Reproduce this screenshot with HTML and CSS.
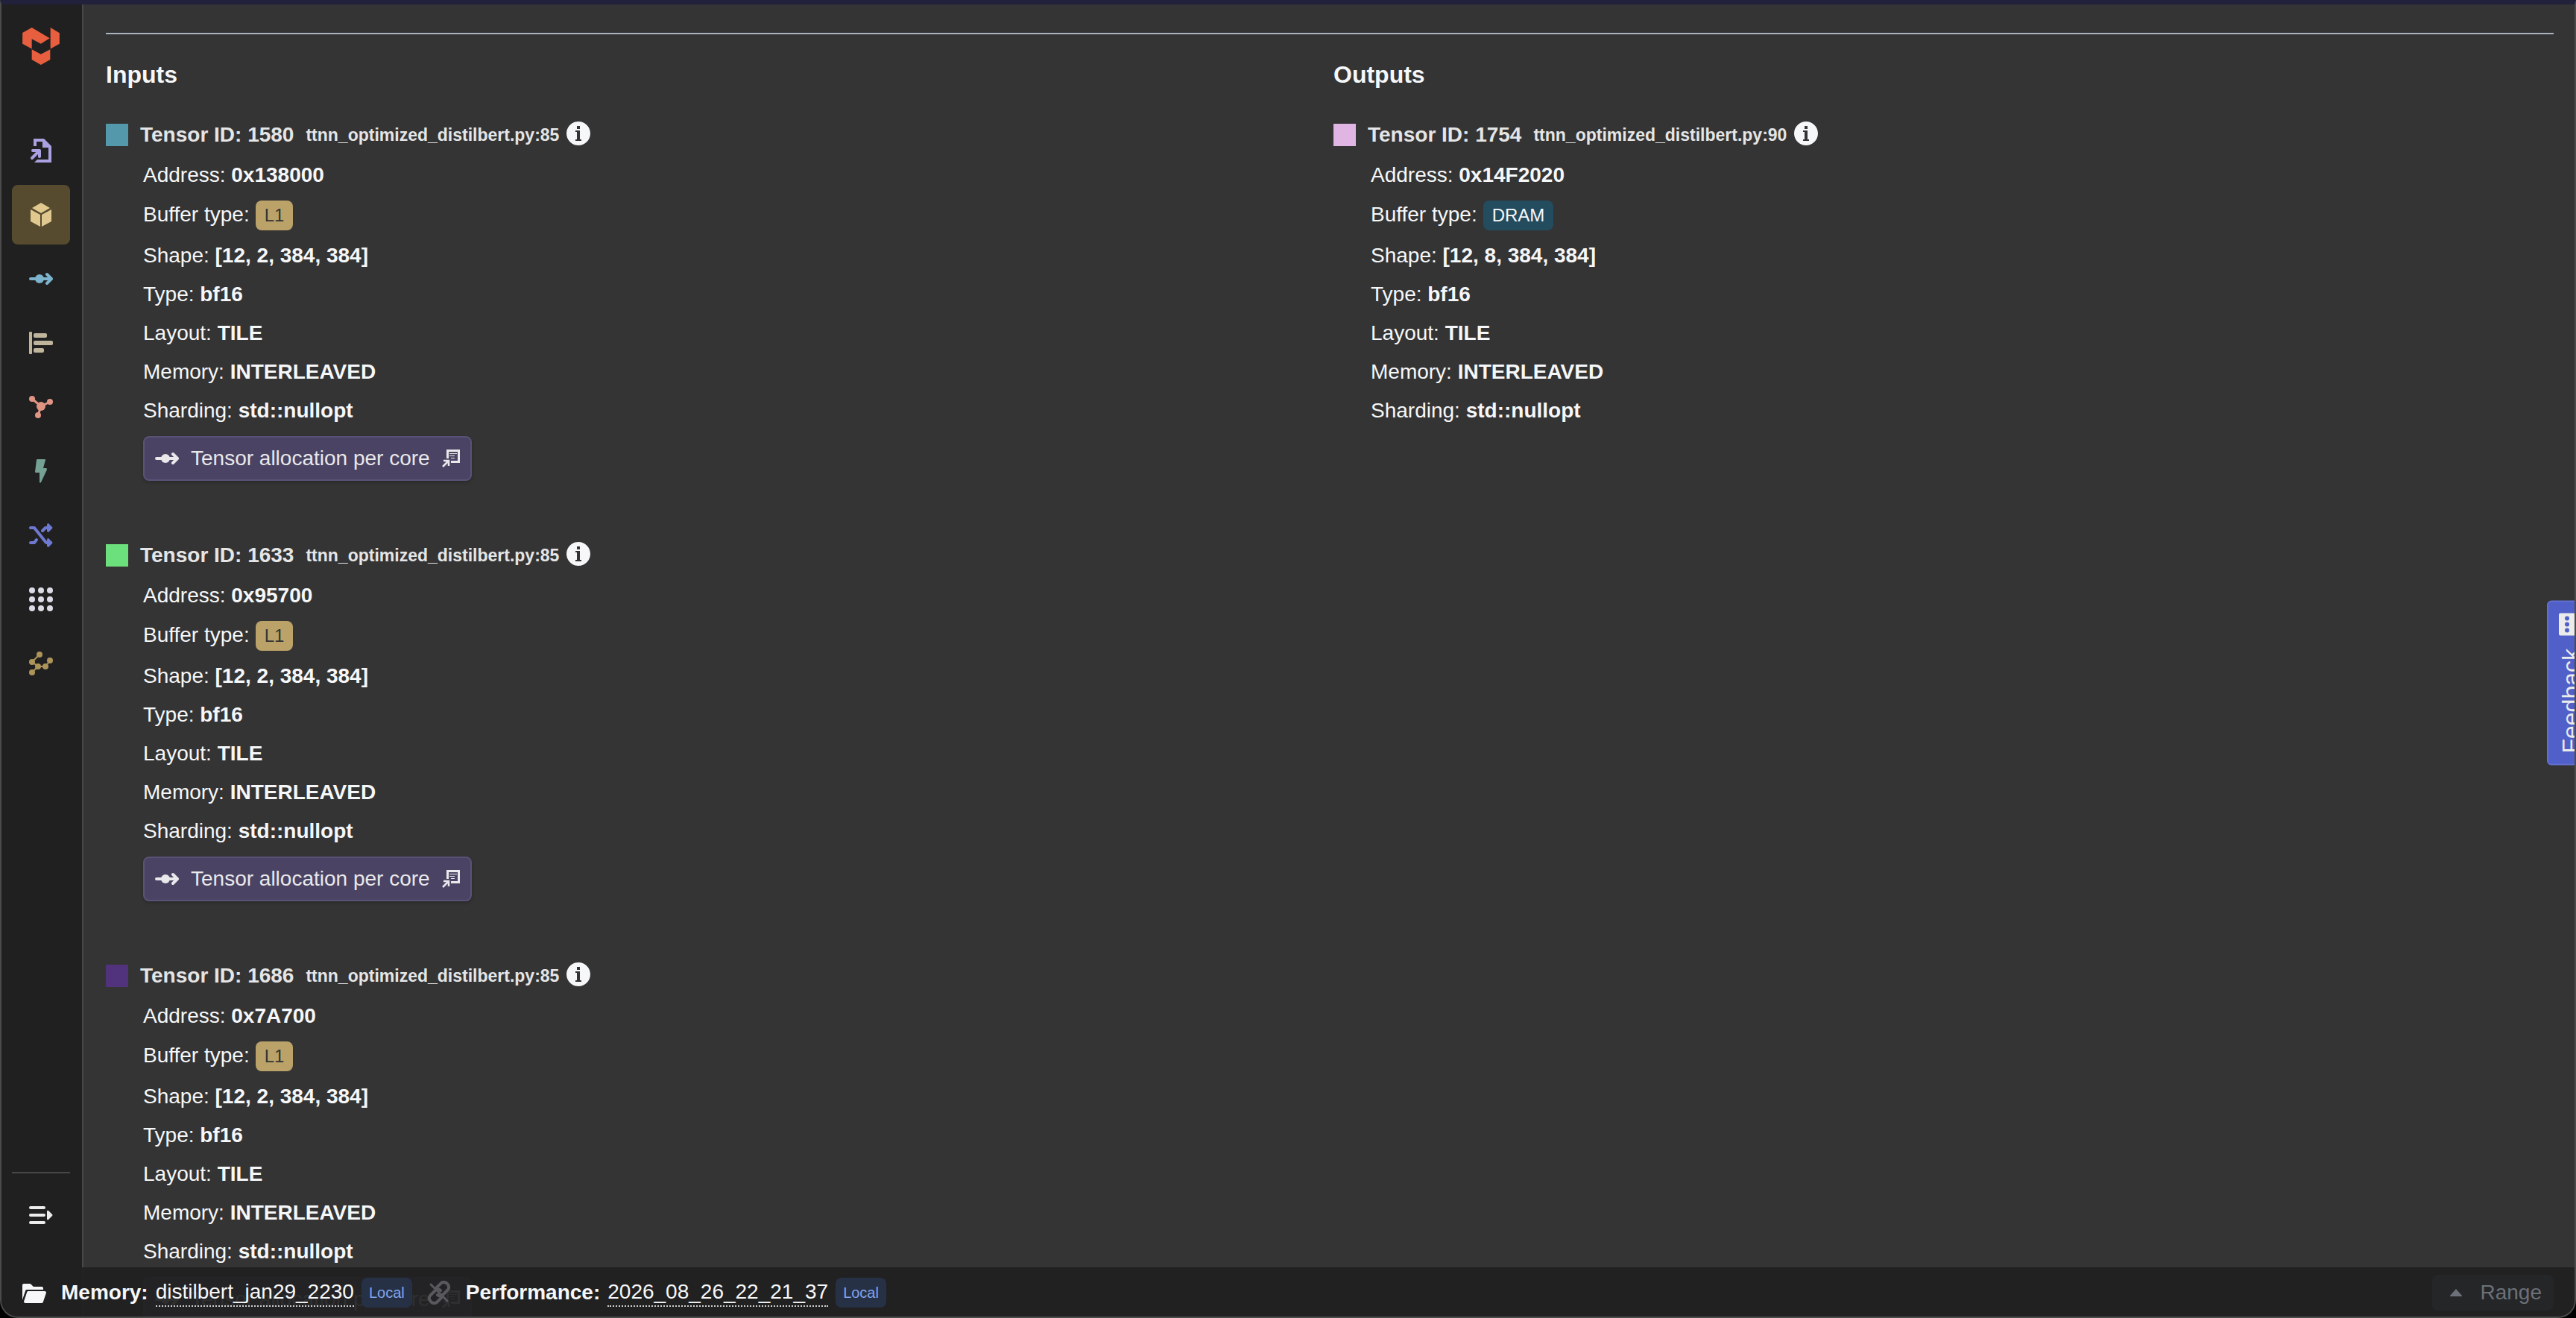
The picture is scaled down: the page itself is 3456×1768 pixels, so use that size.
FILE: index.html
```html
<!DOCTYPE html>
<html lang="en">
<head>
  <meta charset="utf-8">
  <title>Tensors</title>
  <link rel="stylesheet" href="styles.css">
</head>
<body>
  <svg class="sprite" aria-hidden="true">
    <symbol id="flow" viewBox="0 0 32 32">
      <path d="M2 16H29M24 10l6 6-6 6" fill="none" stroke="currentColor" stroke-width="4" stroke-linecap="round" stroke-linejoin="round"/>
      <circle cx="14" cy="16" r="6"/>
    </symbol>
    <symbol id="info" viewBox="0 0 16 16">
      <path d="M8 0C3.580 0 0 3.580 0 8s3.580 8 8 8 8-3.580 8-8-3.580-8-8-8zM7 3h2v2H7V3zm3 10H6v-1h1V7H6V6h3v6h1v1z"/>
    </symbol>
    <symbol id="open" viewBox="0 0 24 24">
      <path d="M6 0H24V18H12V15H21V3H9V12H6z"/>
      <path d="M10 5.500h10M10 8.500h7M12 11.500h5" stroke="currentColor" stroke-width="1"/>
      <path d="M1 23l8-8M2 15h7v7" fill="none" stroke="currentColor" stroke-width="2.500"/>
    </symbol>
  </svg>

  <div class="app">
    <aside class="sidebar">
      <a class="logo" href="#" aria-label="Home">
        <svg viewBox="87 111 151 152">
          <path d="M87 132L125 111L198 154L162 177L125 157V198L87 177zM201 111L238 133V177L201 198zM125 200L162 220L200 200V242L162 263L125 242z"/>
        </svg>
      </a>
      <nav class="nav">
        <a class="nav-item reports" href="#" aria-label="Reports">
          <svg class="icon" viewBox="0 0 32 32">
            <path d="M6 10V0H20L30 10V32H7L11 28H26V12H18V4H10V10z"/>
            <path d="M4 26L14 16M5 16H14V24" fill="none" stroke="currentColor" stroke-width="4" stroke-linecap="round" stroke-linejoin="round"/>
          </svg>
        </a>
        <a class="nav-item operations active" href="#" aria-label="Operations">
          <svg class="icon" viewBox="0 0 32 32">
            <path d="M16 0L28 7L16 14L4 7zM2 9L15 16V32L2 25zM30 9L17 16V32L30 25z"/>
          </svg>
        </a>
        <a class="nav-item tensors" href="#" aria-label="Tensors">
          <svg class="icon"><use href="#flow"/></svg>
        </a>
        <a class="nav-item buffers" href="#" aria-label="Buffers">
          <svg class="icon" viewBox="0 0 32 32">
            <rect x="0" y="1" width="4" height="30" rx="1"/>
            <rect x="6" y="3" width="18" height="6" rx="2"/>
            <rect x="6" y="13" width="26" height="6" rx="2"/>
            <rect x="6" y="23" width="14" height="6" rx="2"/>
          </svg>
        </a>
        <a class="nav-item graph" href="#" aria-label="Graph">
          <svg class="icon" viewBox="0 0 32 32">
            <path d="M4 5L16 15L28 9M16 15L12 27" fill="none" stroke="currentColor" stroke-width="3"/>
            <circle cx="16" cy="15" r="6"/>
            <circle cx="4" cy="5" r="4"/>
            <circle cx="28" cy="9" r="4"/>
            <circle cx="12" cy="27" r="4"/>
          </svg>
        </a>
        <a class="nav-item performance" href="#" aria-label="Performance">
          <svg class="icon" viewBox="0 0 32 32">
            <path d="M11 0H21Q22 0 22 1L19 12H23Q24 12 24 14L16 31Q15 32 14 31V18H9Q8 18 8 17L10 1Q10 0 11 0z"/>
          </svg>
        </a>
        <a class="nav-item npe" href="#" aria-label="NPE">
          <svg class="icon" viewBox="0 0 32 32">
            <path d="M2 6H7L23 26H27M2 26H7L10 22M18 10L22 6H27" fill="none" stroke="currentColor" stroke-width="4" stroke-linecap="round" stroke-linejoin="round"/>
            <path d="M24 2Q24 0 26 0L31 5Q32 6 31 7L26 12Q24 12 24 10zM24 22Q24 20 26 20L31 25Q32 26 31 27L26 32Q24 32 24 30z"/>
          </svg>
        </a>
        <a class="nav-item cluster" href="#" aria-label="Cluster">
          <svg class="icon" viewBox="0 0 32 32">
            <circle cx="4" cy="4" r="4"/><circle cx="16" cy="4" r="4"/><circle cx="28" cy="4" r="4"/>
            <circle cx="4" cy="16" r="4"/><circle cx="16" cy="16" r="4"/><circle cx="28" cy="16" r="4"/>
            <circle cx="4" cy="28" r="4"/><circle cx="16" cy="28" r="4"/><circle cx="28" cy="28" r="4"/>
          </svg>
        </a>
        <a class="nav-item topology" href="#" aria-label="Topology">
          <svg class="icon" viewBox="0 0 32 32">
            <path d="M14 4L4 14L12 20H22L28 12M12 20L4 28" fill="none" stroke="currentColor" stroke-width="2"/>
            <circle cx="14" cy="4" r="4"/><circle cx="4" cy="14" r="4"/><circle cx="12" cy="20" r="4"/>
            <circle cx="22" cy="20" r="4"/><circle cx="28" cy="12" r="4"/><circle cx="4" cy="28" r="4"/>
          </svg>
        </a>
      </nav>
      <div class="sidebar-bottom">
        <button type="button" class="nav-item" aria-label="Expand menu">
          <svg class="icon" viewBox="0 0 32 32">
            <path d="M2 6H20M2 16H20M2 26H20" stroke="currentColor" stroke-width="4" stroke-linecap="round"/>
            <path d="M24 11Q24 9 26 10L31 15Q32 16 31 17L26 22Q24 23 24 21z"/>
          </svg>
        </button>
      </div>
    </aside>

    <main class="content">
      <div class="columns">
        <section>
          <h3>Inputs</h3>

          <article class="tensor">
            <div class="tensor-title">
              <span class="swatch teal"></span>
              <h4>Tensor ID: 1580</h4>
              <span class="source">ttnn_optimized_distilbert.py:85</span>
              <svg class="icon info"><use href="#info"/></svg>
            </div>
            <ul class="details">
              <li>Address: <strong>0x138000</strong></li>
              <li class="buffer">Buffer type: <span class="tag l1">L1</span></li>
              <li>Shape: <strong>[12, 2, 384, 384]</strong></li>
              <li>Type: <strong>bf16</strong></li>
              <li>Layout: <strong>TILE</strong></li>
              <li>Memory: <strong>INTERLEAVED</strong></li>
              <li>Sharding: <strong>std::nullopt</strong></li>
              <li>
                <button type="button" class="allocation">
                  <svg class="icon"><use href="#flow"/></svg>
                  Tensor allocation per core
                  <svg class="icon-small"><use href="#open"/></svg>
                </button>
              </li>
            </ul>
          </article>

          <article class="tensor">
            <div class="tensor-title">
              <span class="swatch green"></span>
              <h4>Tensor ID: 1633</h4>
              <span class="source">ttnn_optimized_distilbert.py:85</span>
              <svg class="icon info"><use href="#info"/></svg>
            </div>
            <ul class="details">
              <li>Address: <strong>0x95700</strong></li>
              <li class="buffer">Buffer type: <span class="tag l1">L1</span></li>
              <li>Shape: <strong>[12, 2, 384, 384]</strong></li>
              <li>Type: <strong>bf16</strong></li>
              <li>Layout: <strong>TILE</strong></li>
              <li>Memory: <strong>INTERLEAVED</strong></li>
              <li>Sharding: <strong>std::nullopt</strong></li>
              <li>
                <button type="button" class="allocation">
                  <svg class="icon"><use href="#flow"/></svg>
                  Tensor allocation per core
                  <svg class="icon-small"><use href="#open"/></svg>
                </button>
              </li>
            </ul>
          </article>

          <article class="tensor">
            <div class="tensor-title">
              <span class="swatch purple"></span>
              <h4>Tensor ID: 1686</h4>
              <span class="source">ttnn_optimized_distilbert.py:85</span>
              <svg class="icon info"><use href="#info"/></svg>
            </div>
            <ul class="details">
              <li>Address: <strong>0x7A700</strong></li>
              <li class="buffer">Buffer type: <span class="tag l1">L1</span></li>
              <li>Shape: <strong>[12, 2, 384, 384]</strong></li>
              <li>Type: <strong>bf16</strong></li>
              <li>Layout: <strong>TILE</strong></li>
              <li>Memory: <strong>INTERLEAVED</strong></li>
              <li>Sharding: <strong>std::nullopt</strong></li>
              <li>
                <button type="button" class="allocation">
                  <svg class="icon"><use href="#flow"/></svg>
                  Tensor allocation per core
                  <svg class="icon-small"><use href="#open"/></svg>
                </button>
              </li>
            </ul>
          </article>
        </section>

        <section>
          <h3>Outputs</h3>

          <article class="tensor">
            <div class="tensor-title">
              <span class="swatch pink"></span>
              <h4>Tensor ID: 1754</h4>
              <span class="source">ttnn_optimized_distilbert.py:90</span>
              <svg class="icon info"><use href="#info"/></svg>
            </div>
            <ul class="details">
              <li>Address: <strong>0x14F2020</strong></li>
              <li class="buffer">Buffer type: <span class="tag dram">DRAM</span></li>
              <li>Shape: <strong>[12, 8, 384, 384]</strong></li>
              <li>Type: <strong>bf16</strong></li>
              <li>Layout: <strong>TILE</strong></li>
              <li>Memory: <strong>INTERLEAVED</strong></li>
              <li>Sharding: <strong>std::nullopt</strong></li>
            </ul>
          </article>
        </section>
      </div>
    </main>

    <button type="button" class="feedback">
      Feedback
      <svg class="icon" viewBox="0 0 32 32">
        <path fill-rule="evenodd" d="M10 1H30Q32 1 32 3V29Q32 31 30 31H10Q8 31 8 29V24L1 17V14H8V3Q8 1 10 1zM21 5a3 3 0 1 0 0 6 3 3 0 1 0 0-6zM21 13a3 3 0 1 0 0 6 3 3 0 1 0 0-6zM21 21a3 3 0 1 0 0 6 3 3 0 1 0 0-6z"/>
      </svg>
    </button>

    <footer class="footer">
      <div class="report">
        <svg class="icon" viewBox="0 0 16 16">
          <path d="M2.060 6.690c.14-.4.5-.69.94-.69h11V5c0-.55-.45-1-1-1H7.410l-1.700-1.710A.997.997 0 005 2H1c-.55 0-1 .45-1 1v9.840l2.050-6.150h.01zM16 8c0-.55-.45-1-1-1H4c-.44 0-.81.29-.94.69l-2 6A1.003 1.003 0 002 15h11c.44 0 .81-.29.94-.69l2-6c.04-.1.06-.2.06-.31z"/>
        </svg>
        <strong>Memory:</strong>
        <a class="report-name" href="#">distilbert_jan29_2230</a>
        <span class="tag local">Local</span>
      </div>
      <svg class="icon unlinked" viewBox="0 0 32 32">
        <g fill="none" stroke="currentColor" stroke-width="4" stroke-linecap="round">
          <path d="M13 9l6-6c3-2 6-1 8 1s3 5 1 8l-7 7c-2 2-5 2-7 0M19 23l-6 6c-3 2-6 1-8-1s-3-5-1-8l7-7c2-2 5-2 7 0"/>
          <path d="M5 5L27 27" stroke-width="3"/>
        </g>
      </svg>
      <div class="report">
        <strong>Performance:</strong>
        <a class="report-name" href="#">2026_08_26_22_21_37</a>
        <span class="tag local">Local</span>
      </div>
      <button type="button" class="range" disabled>
        <svg class="icon" viewBox="0 0 32 32"><path d="M8 20L16 11L24 20V21H8z"/></svg>
        Range
      </button>
    </footer>
  </div>
</body>
</html>
```

FILE: styles.css
```css
* {
  box-sizing: border-box;
}
body {
  margin: 0;
  background-color: #000;
  color: #f6f7f9;
  font-family: "Liberation Sans", Arial, sans-serif;
  font-size: 28px;
  line-height: 36px;
}
h3,
h4,
ul {
  margin: 0;
  padding: 0;
}
a {
  color: inherit;
  text-decoration: none;
}
button {
  font: inherit;
  color: inherit;
  background: none;
  border: none;
  padding: 0;
}
svg {
  display: block;
  fill: currentColor;
  flex-shrink: 0;
}
.sprite {
  position: absolute;
  width: 0;
  height: 0;
}
.icon {
  width: 32px;
  height: 32px;
}
.icon-small {
  width: 24px;
  height: 24px;
}
.app {
  position: relative;
  display: flex;
  height: 100vh;
  overflow: hidden;
  background-color: #343434;
  border: 2px solid #4b4b4b;
  border-top: 6px solid #21213b;
  border-radius: 0 0 24px 24px;
}

/* sidebar */
.sidebar {
  display: flex;
  flex-direction: column;
  flex-shrink: 0;
  width: 110px;
  padding: 31px 16px 96px 14px;
  background-color: #202020;
  border-right: 2px solid #484848;
}
.logo {
  align-self: center;
  color: #e75f3e;
}
.logo svg {
  width: 50px;
  height: 50px;
}
.nav {
  display: flex;
  flex-direction: column;
  gap: 6px;
  margin-top: 75px;
}
.nav-item {
  display: flex;
  align-items: center;
  justify-content: center;
  width: 100%;
  height: 80px;
  border-radius: 8px;
}
.reports { color: #aca1e0; }
.operations { color: #e0c88f; }
.operations.active { background-color: #564b2e; }
.tensors { color: #7cb3cd; }
.buffers { color: #beb59c; }
.graph { color: #e09483; }
.performance { color: #74a194; }
.npe { color: #6f79d2; }
.cluster { color: #dcdce6; }
.topology { color: #ad9459; }
.sidebar-bottom {
  margin-top: auto;
  padding-top: 16px;
  border-top: 2px solid #484848;
  color: #ececec;
}

/* tensors */
.content {
  flex: 1;
  min-width: 0;
  padding: 38px 28px 0 30px;
}
.columns {
  display: grid;
  grid-template-columns: 1fr 1fr;
  gap: 10px;
  padding-top: 34px;
  border-top: 2px solid #abb3bf;
}
h3 {
  margin-bottom: 43px;
  font-size: 32px;
  line-height: 40px;
}
.tensor {
  margin-bottom: 82px;
}
.tensor-title {
  display: flex;
  align-items: center;
  color: #e5e5e5;
}
.swatch {
  width: 30px;
  height: 30px;
  margin-right: 16px;
}
.teal { background-color: #5398ab; }
.green { background-color: #6ce07c; }
.purple { background-color: #50337c; }
.pink { background-color: #e0b5e3; }
h4 {
  font-size: 28px;
}
.source {
  margin: 0 10px 0 16px;
  font-size: 23px;
  font-weight: bold;
}
.info {
  align-self: flex-start;
  color: #f6f7f9;
}
.details {
  display: flex;
  flex-direction: column;
  gap: 16px;
  margin-top: 18px;
  padding-left: 50px;
  list-style: none;
}
.buffer {
  display: flex;
  align-items: baseline;
  gap: 8px;
}
.tag {
  padding: 4px 12px;
  border-radius: 8px;
  font-size: 24px;
  line-height: 32px;
}
.l1 {
  background-color: #bba269;
  color: #343434;
}
.dram {
  background-color: #234c5f;
}
.allocation {
  display: flex;
  align-items: center;
  gap: 16px;
  height: 60px;
  padding: 0 14px;
  background-color: #4a4364;
  border: 2px solid #595276;
  border-radius: 8px;
  box-shadow: 0 2px 4px rgba(0, 0, 0, 0.2);
  color: #e9e8ea;
}

/* sticks out over the right edge of the window */
.feedback {
  position: absolute;
  top: 800px;
  right: -27px;
  display: flex;
  align-items: center;
  gap: 16px;
  width: 64px;
  padding: 14px 0;
  writing-mode: vertical-rl;
  transform: rotate(180deg);
  background-color: #5160c9;
  border: 2px solid #6370cf;
  border-radius: 6px;
  color: #ebebeb;
  font-size: 32px;
}

/* footer */
.footer {
  position: absolute;
  left: 0;
  right: 0;
  bottom: 0;
  display: flex;
  align-items: center;
  gap: 20px;
  padding: 10px 28px 8px;
  background-color: rgba(32, 32, 32, 0.93);
}
.report {
  display: flex;
  align-items: center;
  gap: 10px;
}
.report .icon {
  margin-right: 10px;
}
.report-name {
  border-bottom: 2px dotted #d0d0d0;
}
.local {
  padding: 4px 10px;
  background-color: #263146;
  color: #82a4ea;
  font-size: 20px;
}
.unlinked {
  color: #58595c;
}
.range {
  display: flex;
  align-items: center;
  gap: 16px;
  height: 48px;
  margin-left: auto;
  padding: 0 16px;
  background-color: #252628;
  border-radius: 8px;
  color: #6c7078;
}
```
